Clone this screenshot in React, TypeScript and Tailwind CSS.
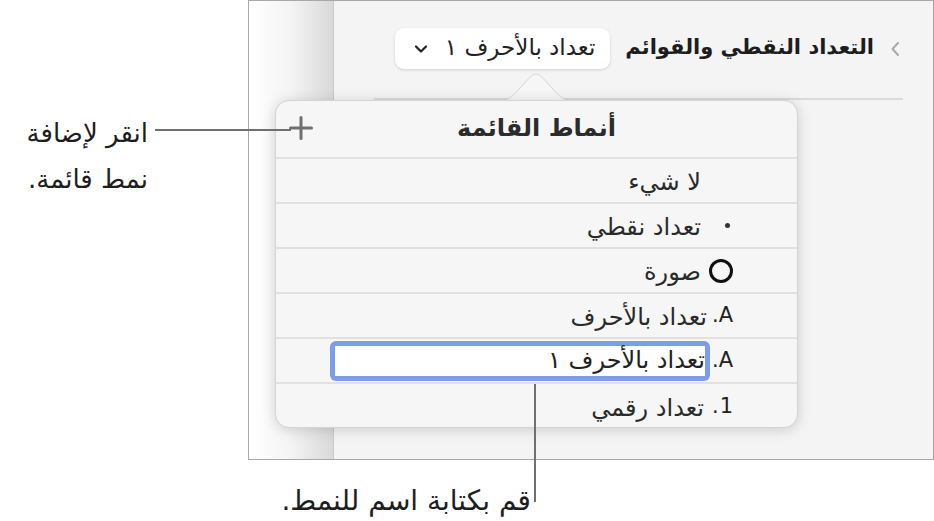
const font = "font-['DejaVu_Sans','Noto_Sans_Arabic',sans-serif]";

function Plus() {
  return (
    <svg width="24" height="24" viewBox="0 0 24 24" className="block">
      <path d="M12 1.5v21M1.5 12h21" stroke="#6f6f6f" strokeWidth="3" strokeLinecap="round" />
    </svg>
  );
}

type Row = { marker?: string; label: string; kind?: "dot" | "ring" | "edit"; shift: string };

const rows: Row[] = [
  { label: "لا شيء", shift: "mr-0" },
  { label: "تعداد نقطي", kind: "dot", shift: "mr-0" },
  { label: "صورة", kind: "ring", shift: "mr-0" },
  { marker: "A", label: "تعداد بالأحرف", shift: "mr-[-6px]" },
  { marker: "A", label: "تعداد بالأحرف ١", kind: "edit", shift: "mr-[-9px]" },
  { marker: "1", label: "تعداد رقمي", shift: "mr-[-3px]" },
];

// in the rtl list the period of "A." / "1." sits on the left of the letter
function Marker({ r }: { r: Row }) {
  return (
    <span dir="ltr" className="w-[32px] shrink-0 flex flex-row items-center justify-end text-[21px] text-[#222]">
      {r.kind === "ring" && <span className="w-[24px] h-[24px] rounded-full border-[3px] border-[#111]" />}
      {r.kind === "dot" && <span className="w-[5px] h-[5px] rounded-full bg-[#333] mr-[3px]" />}
      {r.marker && (
        <>
          <span className={r.marker === "1" ? "mr-[1px]" : ""}>.</span>
          <span>{r.marker}</span>
        </>
      )}
    </span>
  );
}

function Popover() {
  return (
    <div className="absolute left-[275px] top-[100px] w-[523px] h-[328px]">
      {/* arrow */}
      <svg width="90" height="30" viewBox="0 0 90 30" className="absolute left-[216px] top-[-27px]">
        <path d="M0 29 C14 29 20 26 28 16 L40 3 Q45 -1 50 3 L62 16 C70 26 76 29 90 29 Z" fill="#f6f6f6" stroke="#d6d6d6" strokeWidth="1" />
      </svg>
      <div className="relative w-full h-full rounded-[14px] bg-[#f6f6f6] border border-[#d4d4d4] shadow-[0_2px_14px_rgba(0,0,0,0.16)] overflow-hidden">
        <div className="h-[58px] relative flex items-center justify-center border-b-2 border-[#e1e1e1]">
          <span className="text-[24px] leading-none font-bold text-[#2b2b2b] pb-[2px]">أنماط القائمة</span>
          <div className="absolute left-[13px] top-[15px]">
            <Plus />
          </div>
        </div>
        {rows.map((r, i) => (
          <div
            key={i}
            dir="rtl"
            className={`h-[45px] flex items-center pr-[64px] ${i < rows.length - 1 ? "border-b-2 border-[#e1e1e1]" : ""}`}
          >
            <Marker r={r} />
            {r.kind === "edit" ? (
              <div className={`w-[380px] h-[40px] rounded-[6px] bg-[#7d9cea] p-[5px] ${r.shift}`}>
                <div className="w-full h-full bg-white text-right text-[24px] leading-[28px] text-[#222]">{r.label}</div>
              </div>
            ) : (
              <span className={`text-[24px] leading-none text-[#2a2a2a] pt-[2px] ${r.shift}`}>{r.label}</span>
            )}
          </div>
        ))}
      </div>
    </div>
  );
}

export default function App() {
  return (
    <div className={`relative w-[934px] h-[521px] bg-white overflow-hidden ${font}`}>
      <div className="flex">
        <div dir="rtl" className="w-[248px] pt-[110px] pr-[100px] text-[26px] leading-[46px] text-[#1e1e1e]">
          <div>انقر لإضافة</div>
          <div>نمط قائمة.</div>
        </div>
        <div className="w-[686px] h-[460px] border border-[#a8a8a8] flex">
          <div className="w-[85px] h-full bg-gradient-to-r from-white via-[#f4f4f4] to-[#d9d9d9] border-r border-[#c9c9c9]" />
          <div className="flex-1 bg-[#f4f4f4] flex flex-col">
            <div dir="rtl" className="h-[97px] flex items-start pt-[27px] pr-[33px]">
              <svg width="10" height="16" viewBox="0 0 10 16" className="mt-[13px]">
                <path d="M8 2L2.5 8L8 14" fill="none" stroke="#a9a9a9" strokeWidth="2" strokeLinecap="round" strokeLinejoin="round" />
              </svg>
              <span className="mr-[16px] mt-[4px] text-[21px] font-bold text-[#1d1d1d]">التعداد النقطي والقوائم</span>
              <div className="mr-[15px] h-[41px] w-[215px] rounded-[9px] bg-white shadow-[0_1px_3px_rgba(0,0,0,0.15)] flex items-center pr-[15px] pl-[19px]">
                <span className="text-[23px] leading-none text-[#222] pb-[3px]">تعداد بالأحرف ١</span>
                <svg width="14" height="10" viewBox="0 0 14 10" className="mr-auto">
                  <path d="M2 2.5L7 7.5L12 2.5" fill="none" stroke="#222" strokeWidth="2.2" strokeLinecap="round" strokeLinejoin="round" />
                </svg>
              </div>
            </div>
            <div className="h-[2px] bg-[#dadada] ml-[40px] mr-[30px]" />
          </div>
        </div>
      </div>
      <div dir="rtl" className="w-[531px] text-[28px] leading-[40px] text-[#1e1e1e] pt-[21px]">قم بكتابة اسم للنمط.</div>

      <Popover />

      {/* callout lines */}
      <div className="absolute left-[155px] top-[129px] w-[136px] h-[2px] bg-[#707070]" />
      <div className="absolute left-[534px] top-[384px] w-[2px] h-[118px] bg-[#707070]" />
    </div>
  );
}
